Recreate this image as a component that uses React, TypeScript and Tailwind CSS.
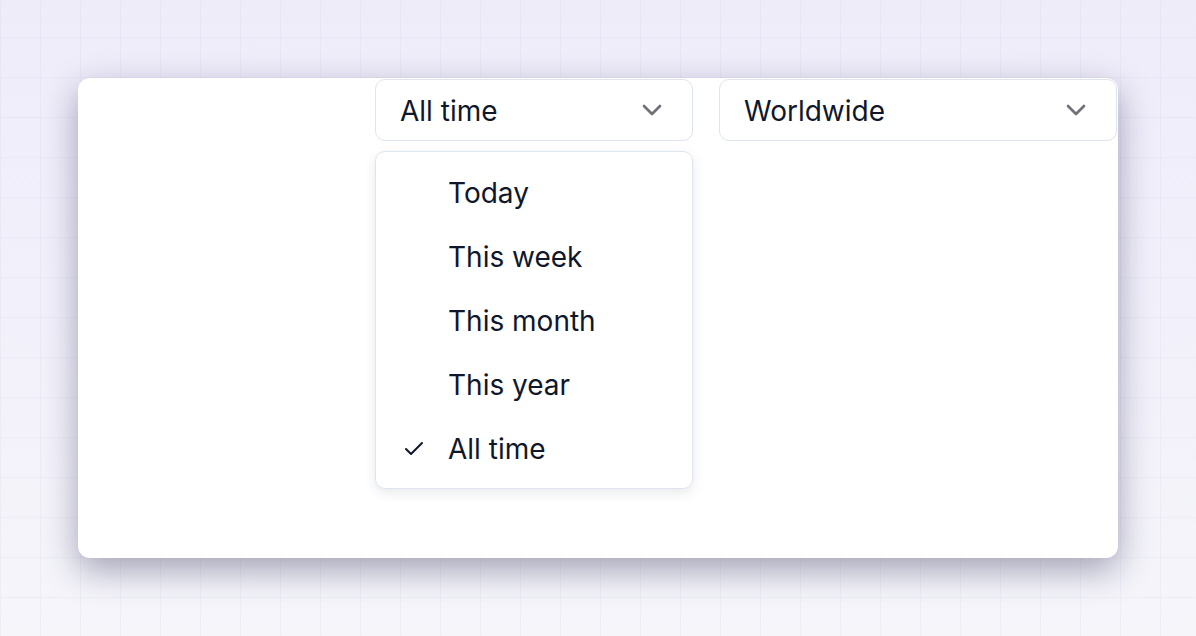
import { Check, ChevronDown } from "lucide-react"

const ranges = ["Today", "This week", "This month", "This year", "All time"]

function SelectButton({ label, width }: { label: string; width: string }) {
  return (
    <button
      className={`${width} h-[62px] flex items-center justify-between px-6 bg-white border border-[#dfe5ee] rounded-[10px] text-[28px] text-[#0f172a]`}
    >
      <span className="pt-px">{label}</span>
      <ChevronDown className="w-8 h-8 text-[#71717a]" strokeWidth={2} />
    </button>
  )
}

export default function App() {
  const selected = "All time"

  return (
    <div
      className="w-[1196px] h-[636px] overflow-hidden pt-[78px] pl-[78px]"
      style={{
        fontFamily: "Inter, 'Noto Sans', sans-serif",
        backgroundImage:
          "linear-gradient(to right, rgba(110,100,190,0.05) 1px, transparent 1px), linear-gradient(to bottom, rgba(110,100,190,0.05) 1px, transparent 1px), linear-gradient(to bottom, #efecfa, #f5f5fa)",
        backgroundSize: "40px 40px, 40px 40px, auto",
        backgroundPosition: "0 0, 0 -3px, 0 0",
      }}
    >
      <div className="w-[1040px] h-[480px] bg-white rounded-[12px] shadow-[0_12px_34px_rgba(30,30,70,0.38)] flex justify-end gap-[26px] pt-px pr-px">
        {/* Time range */}
        <div className="relative">
          <SelectButton label={selected} width="w-[318px]" />
          <div className="absolute top-[72px] left-0 w-[318px] bg-white border border-[#dfe5ee] rounded-[10px] shadow-[0_4px_12px_rgba(30,40,80,0.10)] p-2">
            {ranges.map((r) => (
              <div key={r} className="relative h-16 flex items-center pl-16 pt-px text-[28px] text-[#0f172a]">
                {r === selected && (
                  <Check className="absolute left-[18px] top-[21px] w-6 h-6 text-[#0f172a]" strokeWidth={2} />
                )}
                {r}
              </div>
            ))}
          </div>
        </div>

        {/* Region */}
        <SelectButton label="Worldwide" width="w-[398px]" />
      </div>
    </div>
  )
}
